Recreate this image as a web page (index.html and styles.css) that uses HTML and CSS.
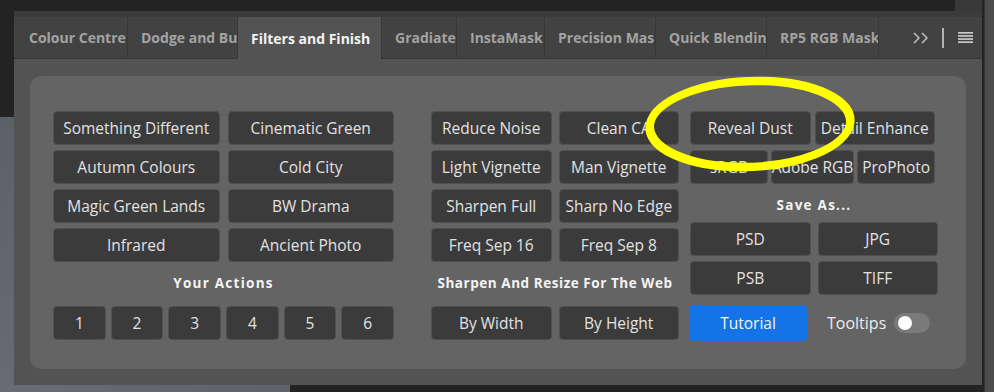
FILE: index.html
```html
<!DOCTYPE html>
<html lang="en">
<head>
    <meta charset="UTF-8">
    <title>Filters and Finish</title>
    <link rel="stylesheet" href="styles.css">
</head>
<body>

    <div class="panel">
        <div class="panel-head"></div>

        <div class="tabs">
            <div class="tab">Colour Centre</div>
            <div class="tab">Dodge and Burn</div>
            <div class="tab active">Filters and Finish</div>
            <div class="tab">Gradiate</div>
            <div class="tab">InstaMask</div>
            <div class="tab">Precision Masks</div>
            <div class="tab">Quick Blending</div>
            <div class="tab">RP5 RGB Masks</div>
            <div class="tab-tools">
                <svg class="icon-more" width="15" height="12" viewBox="0 0 15 12">
                    <polyline points="1,1 6,6 1,11" />
                    <polyline points="9,1 14,6 9,11" />
                </svg>
                <span class="tool-sep"></span>
                <svg class="icon-menu" width="15" height="11" viewBox="0 0 15 11">
                    <rect x="0" y="0" width="15" height="1.7" />
                    <rect x="0" y="3.1" width="15" height="1.7" />
                    <rect x="0" y="6.2" width="15" height="1.7" />
                    <rect x="0" y="9.3" width="15" height="1.7" />
                </svg>
            </div>
        </div>

        <div class="content">
            <div class="inner">

                <div class="col col-left">
                    <div class="grid-2">
                        <button class="btn">Something Different</button>
                        <button class="btn">Cinematic Green</button>
                        <button class="btn">Autumn Colours</button>
                        <button class="btn">Cold City</button>
                        <button class="btn">Magic Green Lands</button>
                        <button class="btn">BW Drama</button>
                        <button class="btn">Infrared</button>
                        <button class="btn">Ancient Photo</button>
                    </div>
                    <h3 class="heading">Your Actions</h3>
                    <div class="actions">
                        <button class="btn">1</button>
                        <button class="btn">2</button>
                        <button class="btn">3</button>
                        <button class="btn">4</button>
                        <button class="btn">5</button>
                        <button class="btn">6</button>
                    </div>
                </div>

                <div class="col col-mid">
                    <div class="grid-2 wide-gap">
                        <button class="btn">Reduce Noise</button>
                        <button class="btn">Clean CA</button>
                        <button class="btn">Light Vignette</button>
                        <button class="btn">Man Vignette</button>
                        <button class="btn">Sharpen Full</button>
                        <button class="btn">Sharp No Edge</button>
                        <button class="btn">Freq Sep 16</button>
                        <button class="btn">Freq Sep 8</button>
                    </div>
                    <h3 class="heading narrow">Sharpen And Resize For The Web</h3>
                    <div class="grid-2 wide-gap bottom-row">
                        <button class="btn">By Width</button>
                        <button class="btn">By Height</button>
                    </div>
                </div>

                <div class="col col-right">
                    <div class="grid-2 tight">
                        <button class="btn">Reveal Dust</button>
                        <button class="btn">Detail Enhance</button>
                    </div>
                    <div class="grid-3">
                        <button class="btn">sRGB</button>
                        <button class="btn">Adobe RGB</button>
                        <button class="btn">ProPhoto</button>
                    </div>
                    <h3 class="heading save-as">Save As...</h3>
                    <div class="grid-2 wide-gap">
                        <button class="btn">PSD</button>
                        <button class="btn">JPG</button>
                        <button class="btn">PSB</button>
                        <button class="btn">TIFF</button>
                    </div>
                    <div class="footer-row">
                        <button class="btn btn-blue">Tutorial</button>
                        <span class="toggle-label">Tooltips</span>
                        <span class="toggle"><span class="knob"></span></span>
                    </div>
                </div>

            </div>
        </div>
    </div>

    <div class="side"></div>

    <!-- yellow markup drawn over the screenshot -->
    <svg class="markup" width="994" height="392" viewBox="0 0 994 392">
        <ellipse cx="0" cy="0" rx="100" ry="43" transform="translate(750 124) skewX(-10)" />
    </svg>

</body>
</html>
```

FILE: styles.css
```css
* {
    margin: 0;
    padding: 0;
    box-sizing: border-box;
}

body {
    position: relative;
    display: flex;
    height: 392px;
    overflow: hidden;
    font-family: 'Open Sans', 'Noto Sans', sans-serif;
    background:
        linear-gradient(#5c6068, #686b71) 0 117px / 14px 275px no-repeat,
        linear-gradient(90deg, #696c72, #5e6167) 0 385px / 290px 7px no-repeat,
        linear-gradient(#393939, #393939) 955px 0 / 27px 11px no-repeat,
        #232323;
}

.panel {
    width: 968px;
    height: 374px;
    margin: 11px 0 0 14px;
    display: flex;
    flex-direction: column;
    background-color: #535353;
}

.panel-head {
    height: 6px;
    background-color: #3b3b3b;
}

/* Tab strip */
.tabs {
    display: flex;
    height: 42px;
    background-color: #424242;
}

.tab {
    flex: none;
    height: 100%;
    padding-left: 13px;
    display: flex;
    align-items: center;
    overflow: hidden;
    white-space: nowrap;
    font-size: 14px;
    font-weight: 700;
    color: #a3a3a3;
    border-right: 1px solid #373737;
    border-bottom: 1px solid #373737;
}

.tab:nth-child(1) { width: 114px; padding-left: 15px; }
.tab:nth-child(2) { width: 110px; }
.tab:nth-child(3) { width: 144px; }
.tab:nth-child(4) { width: 75px; }
.tab:nth-child(5) { width: 88px; }
.tab:nth-child(6) { width: 111px; }
.tab:nth-child(7) { width: 111px; }
.tab:nth-child(8) { width: 112px; }

.tab.active {
    background-color: #535353;
    color: #f2f2f2;
    border-bottom: none;
}

.tab-tools {
    flex: 1;
    display: flex;
    align-items: center;
    justify-content: flex-end;
    padding-right: 9px;
    border-bottom: 1px solid #373737;
}

.icon-more polyline {
    fill: none;
    stroke: #c9c9c9;
    stroke-width: 1.4;
}

.tool-sep {
    width: 2px;
    height: 20px;
    margin: 0 14px 0 14px;
    background-color: #b4b4b4;
}

.icon-menu rect {
    fill: #c9c9c9;
}

/* Main area */
.content {
    flex: 1;
    padding: 17px 16px 16px 16px;
}

.inner {
    height: 100%;
    display: flex;
    padding: 35px 0 0 23px;
    background-color: #646464;
    border-radius: 12px;
}

.col {
    display: flex;
    flex-direction: column;
}

.col-left {
    width: 341px;
}

.col-mid {
    width: 248px;
    margin-left: 37px;
}

.col-right {
    width: 248px;
    margin-left: 11px;
}

.grid-2 {
    display: grid;
    grid-template-columns: 1fr 1fr;
    grid-auto-rows: 34px;
    gap: 5px 8px;
}

.grid-2.wide-gap {
    column-gap: 7px;
}

.grid-2.tight {
    width: 245px;
    column-gap: 4px;
}

.grid-3 {
    width: 245px;
    display: grid;
    grid-template-columns: 1fr 1fr 1fr;
    grid-auto-rows: 34px;
    gap: 3px;
    margin-top: 5px;
}

.btn {
    padding: 0;
    background-color: #3b3b3b;
    border: 1px solid #505050;
    border-radius: 4px;
    color: #e2e2e2;
    font-family: 'Open Sans', 'Noto Sans', sans-serif;
    font-size: 15.5px;
    white-space: nowrap;
    cursor: pointer;
}

.heading {
    height: 20px;
    margin-top: 11px;
    line-height: 20px;
    text-align: center;
    font-size: 13.5px;
    font-weight: 700;
    letter-spacing: 1.25px;
    color: #f4f4f4;
}

.heading.narrow {
    letter-spacing: 0.55px;
}

.heading.save-as {
    margin-bottom: 7px;
}

.actions {
    display: flex;
    gap: 5px;
    height: 34px;
    margin-top: 13px;
}

.actions .btn {
    flex: 1;
}

.bottom-row {
    margin-top: 13px;
}

.footer-row {
    display: flex;
    align-items: center;
    height: 36px;
    margin-top: 10px;
}

.btn-blue {
    width: 118px;
    height: 36px;
    margin-left: -1px;
    background-color: #1473e6;
    border-color: #1473e6;
    color: #f4f4f4;
}

.toggle-label {
    margin-left: 20px;
    font-size: 16px;
    color: #ececec;
}

.toggle {
    width: 36px;
    height: 20px;
    margin-left: 8px;
    padding-left: 4px;
    display: flex;
    align-items: center;
    background-color: #7a7a7a;
    border-radius: 10px;
}

.knob {
    width: 14px;
    height: 14px;
    border-radius: 50%;
    background-color: #ffffff;
}

.side {
    width: 10px;
    margin-left: 2px;
    background-color: #4c4c4c;
    border-left: 1px solid #333333;
}

.markup {
    position: absolute;
    top: 0;
    left: 0;
    pointer-events: none;
}

.markup ellipse {
    fill: none;
    stroke: #ffff00;
    stroke-width: 8.5;
}
```
